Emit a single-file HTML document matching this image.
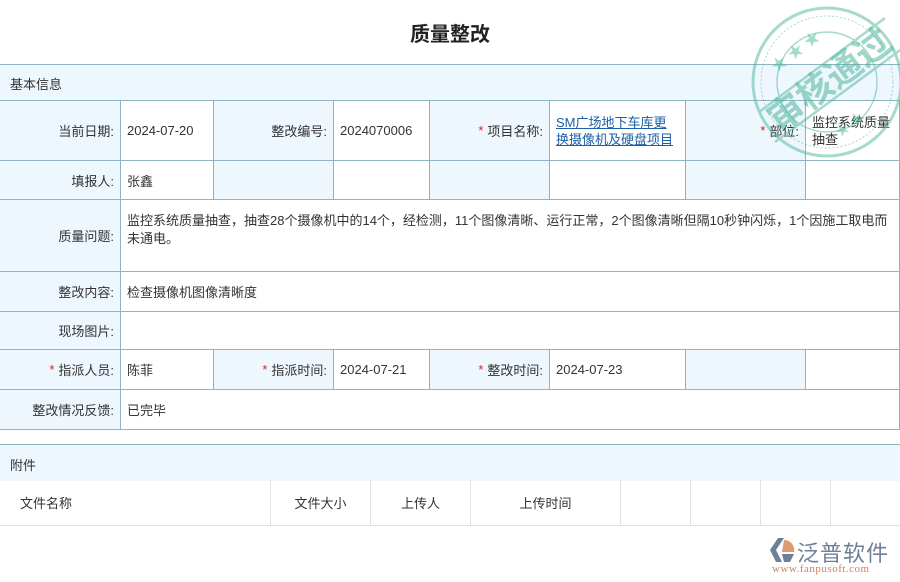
<html><head><style>
body{margin:0;width:900px;height:582px;background:#fff;font-family:"Liberation Sans","Noto Sans CJK SC",sans-serif;position:relative;overflow:hidden;color:#333;font-size:13px}
.c{position:absolute;box-sizing:border-box;border-right:1px solid #8fb3c2;border-bottom:1px solid #8fb3c2;display:flex;align-items:center;padding:0 6px}
.l{background:#eef6fe;justify-content:flex-end}
.v{background:#fff}
.s{color:#e02020;margin-right:4px}
.a{position:absolute;box-sizing:border-box;border-right:1px solid #e2e2e2;border-bottom:1px solid #e2e2e2;height:46px;top:480px;display:flex;align-items:center;justify-content:center}
</style></head><body>
<div style="position:absolute;top:18px;width:900px;text-align:center;font-size:20px;font-weight:bold;color:#222">质量整改</div>
<div style="position:absolute;left:0;top:64px;width:900px;height:37px;box-sizing:border-box;background:#eef6fe;border-top:1px solid #8fb3c2;border-bottom:1px solid #8fb3c2;padding:9px 10px">基本信息</div>

<div class="c l" style="left:0;top:101px;width:121px;height:60px">当前日期:</div>
<div class="c v" style="left:121px;top:101px;width:93px;height:60px">2024-07-20</div>
<div class="c l" style="left:214px;top:101px;width:120px;height:60px">整改编号:</div>
<div class="c v" style="left:334px;top:101px;width:96px;height:60px">2024070006</div>
<div class="c l" style="left:430px;top:101px;width:120px;height:60px"><span class="s">*</span>项目名称:</div>
<div class="c v" style="left:550px;top:101px;width:136px;height:60px;color:#1a5fa8;text-decoration:underline;line-height:17px">SM广场地下车库更换摄像机及硬盘项目</div>
<div class="c l" style="left:686px;top:101px;width:120px;height:60px"><span class="s">*</span>部位:</div>
<div class="c v" style="left:806px;top:101px;width:94px;height:60px;line-height:17px">监控系统质量抽查</div>

<div class="c l" style="left:0;top:161px;width:121px;height:39px">填报人:</div>
<div class="c v" style="left:121px;top:161px;width:93px;height:39px">张鑫</div>
<div class="c l" style="left:214px;top:161px;width:120px;height:39px"></div>
<div class="c v" style="left:334px;top:161px;width:96px;height:39px"></div>
<div class="c l" style="left:430px;top:161px;width:120px;height:39px"></div>
<div class="c v" style="left:550px;top:161px;width:136px;height:39px"></div>
<div class="c l" style="left:686px;top:161px;width:120px;height:39px"></div>
<div class="c v" style="left:806px;top:161px;width:94px;height:39px"></div>

<div class="c l" style="left:0;top:200px;width:121px;height:72px">质量问题:</div>
<div class="c v" style="left:121px;top:200px;width:779px;height:72px;align-items:flex-start;padding-top:12px;line-height:18px">监控系统质量抽查，抽查28个摄像机中的14个，经检测，11个图像清晰、运行正常，2个图像清晰但隔10秒钟闪烁，1个因施工取电而未通电。</div>

<div class="c l" style="left:0;top:272px;width:121px;height:40px">整改内容:</div>
<div class="c v" style="left:121px;top:272px;width:779px;height:40px">检查摄像机图像清晰度</div>
<div class="c l" style="left:0;top:312px;width:121px;height:38px">现场图片:</div>
<div class="c v" style="left:121px;top:312px;width:779px;height:38px"></div>

<div class="c l" style="left:0;top:350px;width:121px;height:40px"><span class="s">*</span>指派人员:</div>
<div class="c v" style="left:121px;top:350px;width:93px;height:40px">陈菲</div>
<div class="c l" style="left:214px;top:350px;width:120px;height:40px"><span class="s">*</span>指派时间:</div>
<div class="c v" style="left:334px;top:350px;width:96px;height:40px">2024-07-21</div>
<div class="c l" style="left:430px;top:350px;width:120px;height:40px"><span class="s">*</span>整改时间:</div>
<div class="c v" style="left:550px;top:350px;width:136px;height:40px">2024-07-23</div>
<div class="c l" style="left:686px;top:350px;width:120px;height:40px"></div>
<div class="c v" style="left:806px;top:350px;width:94px;height:40px"></div>

<div class="c l" style="left:0;top:390px;width:121px;height:40px">整改情况反馈:</div>
<div class="c v" style="left:121px;top:390px;width:779px;height:40px">已完毕</div>

<div style="position:absolute;left:0;top:444px;width:900px;height:37px;box-sizing:border-box;background:#eef6fe;border-top:1px solid #8fb3c2;padding:10px 10px">附件</div>
<div class="a" style="left:0;width:271px;justify-content:flex-start;padding-left:20px">文件名称</div>
<div class="a" style="left:271px;width:100px">文件大小</div>
<div class="a" style="left:371px;width:100px">上传人</div>
<div class="a" style="left:471px;width:150px">上传时间</div>
<div class="a" style="left:621px;width:70px"></div>
<div class="a" style="left:691px;width:70px"></div>
<div class="a" style="left:761px;width:70px"></div>
<div class="a" style="left:831px;width:69px;border-right:none"></div>

<svg style="position:absolute;left:745px;top:0" width="160" height="165" viewBox="0 0 160 165">
<g opacity="0.5" fill="none" stroke="#4fb89a">
<circle cx="82" cy="82" r="74" stroke-width="3"/>
<circle cx="82" cy="82" r="66" stroke-width="1" stroke-dasharray="2 2"/>
<circle cx="82" cy="82" r="50" stroke-width="1.5"/>
<line x1="14" y1="112" x2="140" y2="18" stroke-width="2.5"/>
<line x1="30" y1="142" x2="158" y2="48" stroke-width="2.5"/>
</g>
<text x="86" y="92" transform="rotate(-37 86 82)" font-size="36" font-weight="bold" fill="#4fb89a" opacity="0.55" text-anchor="middle" font-family="Noto Sans CJK SC,sans-serif">审核通过</text>
<text x="22" y="64" font-size="16" fill="#4fb89a" opacity="0.5" transform="rotate(-37 40 55)">★ ★ ★</text>
<text x="88" y="132" font-size="14" fill="#4fb89a" opacity="0.5" transform="rotate(-37 100 125)">★ ★</text>
</svg>

<svg style="position:absolute;left:770px;top:538px" width="26" height="24" viewBox="0 0 26 24"><path d="M8 0 L14 0 L6 12 L12 24 L6 24 L0 12 Z" fill="#6f7f99"/><path d="M14 2 A10 10 0 0 1 24 14 L12 14 Z" fill="#e09a6f"/><path d="M12 16 L24 16 L20 24 L14 24 Z" fill="#6f7f99"/></svg>
<div style="position:absolute;left:797px;top:536px;font-size:22px;color:#6f7f99;letter-spacing:1px">泛普软件</div>
<div style="position:absolute;left:772px;top:563px;font-size:11px;color:#d0805a;font-family:'Liberation Serif',serif;letter-spacing:0.5px">www.fanpusoft.com</div>
</body></html>
